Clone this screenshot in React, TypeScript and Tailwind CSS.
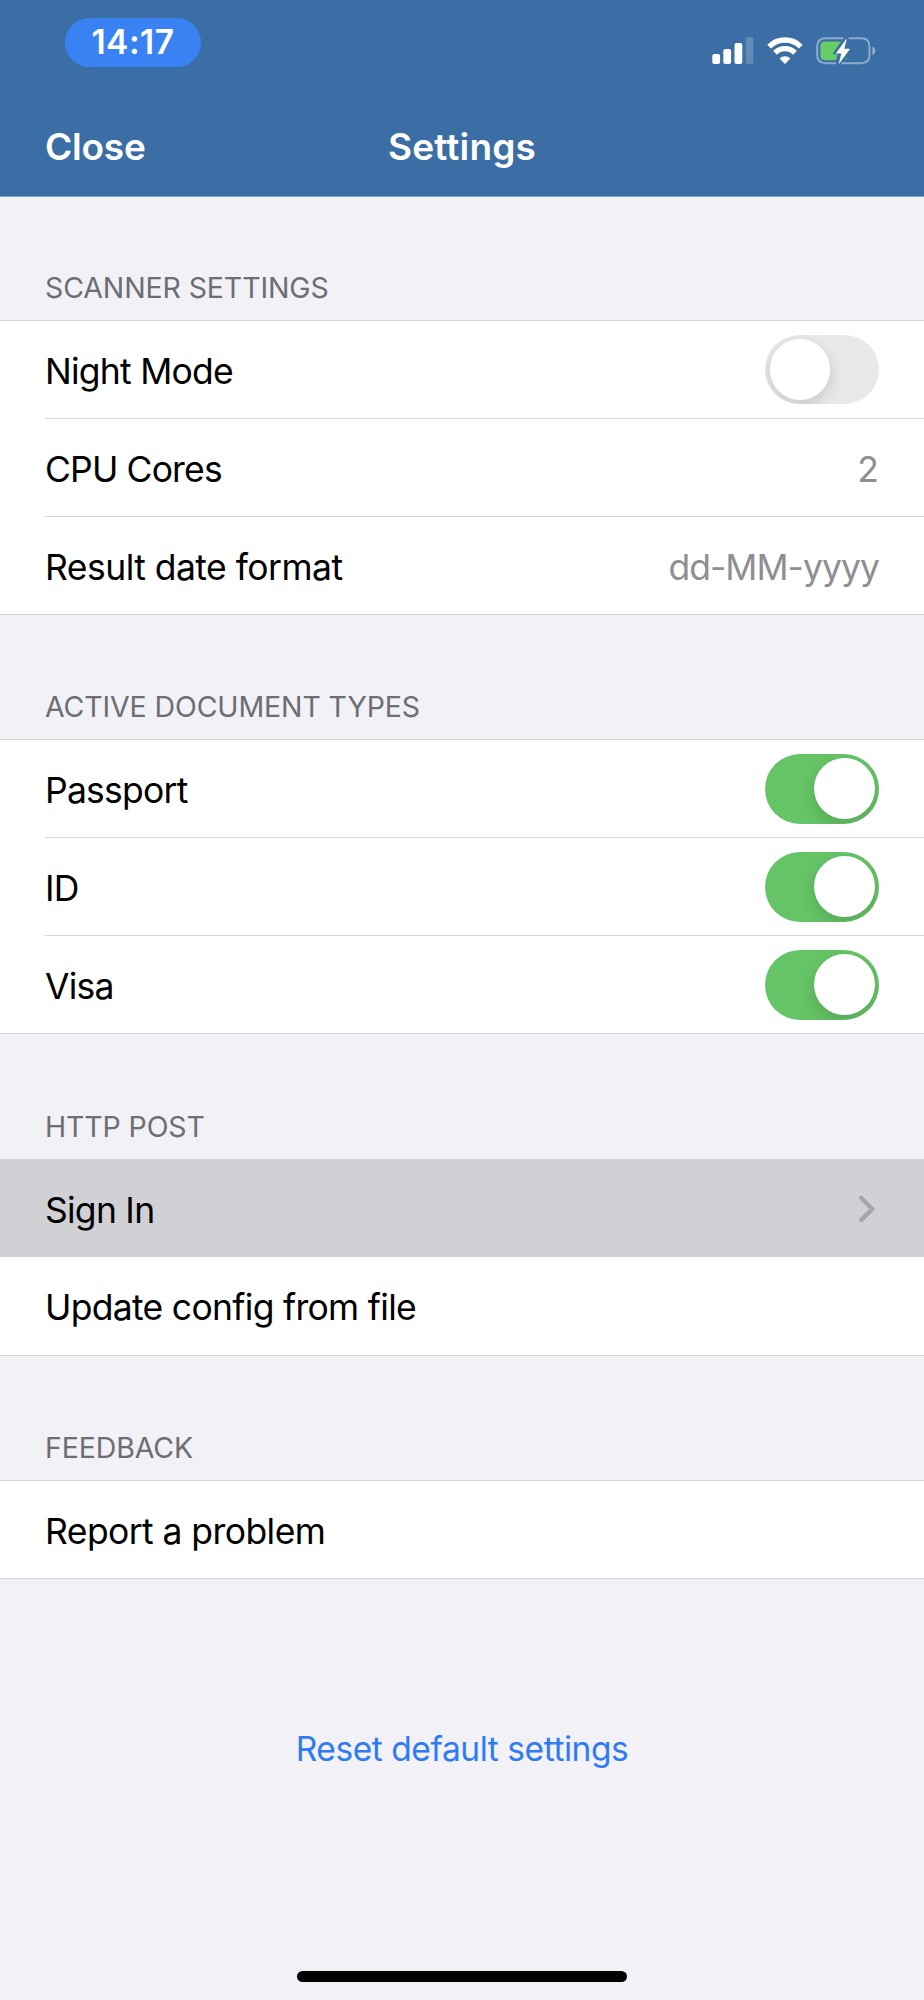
import type { ReactNode } from "react";

function Signal() {
  return (
    <svg width="42" height="28" viewBox="0 0 42 28" className="block">
      <rect x="0.3" y="17" width="7.8" height="10" rx="2" fill="#fff" />
      <rect x="11.3" y="12" width="7.8" height="15" rx="2" fill="#fff" />
      <rect x="22.5" y="6" width="7.8" height="21" rx="2" fill="#fff" />
      <rect x="33.6" y="0" width="7.8" height="27" rx="2" fill="#fff" fillOpacity="0.2" />
    </svg>
  );
}

function Wifi() {
  return (
    <svg width="36" height="28" viewBox="0 0 36 28" className="block">
      <g fill="none" stroke="#fff" strokeWidth="5.4">
        <path d="M2.2 9.6A22.3 22.3 0 0 1 33.8 9.6" />
        <path d="M8 15.8A14 14 0 0 1 28 15.8" />
      </g>
      <path d="M18 27L12.6 21.4A7.8 7.8 0 0 1 23.4 21.4Z" fill="#fff" />
    </svg>
  );
}

function Battery() {
  return (
    <svg width="60" height="28" viewBox="0 0 60 28" className="block">
      <g fill="none" stroke="#fff" strokeOpacity="0.42" strokeWidth="2">
        <path d="M27.6 1.2H10C4.4 1.2 1.2 4 1.2 9.5V18C1.2 23.5 4.4 26.2 10 26.2H20" />
        <path d="M32.5 1.2H45C50.6 1.2 53.5 4 53.5 9.5V18C53.5 23.5 50.6 26.2 45 26.2H25.5" />
      </g>
      <path d="M56.4 9.5C58.3 10.4 59.3 12 59.3 13.8C59.3 15.6 58.3 17.2 56.4 18Z" fill="#fff" fillOpacity="0.45" />
      <path d="M25 4.4H9.5C6 4.4 4.4 6 4.4 9.5V18C4.4 21.6 6 23.2 9.5 23.2H20L21.8 17.3H16.3Z" fill="#67ce67" />
      <path d="M28.8 23.2L31 20.3C30.9 22 30.3 22.9 28.8 23.2Z" fill="#67ce67" />
      <path d="M30.4 2.3L20.2 16.2H25.7L23 26.5L33.7 12H28Z" fill="#fff" stroke="#fff" strokeWidth="0.5" />
    </svg>
  );
}

function Chevron() {
  return (
    <svg width="20" height="30" viewBox="0 0 20 30">
      <path d="M2.3 4L13.3 15L2.3 26" fill="none" stroke="#a5a5aa" strokeWidth="4.5" strokeLinecap="round" strokeLinejoin="round" />
    </svg>
  );
}

function Toggle({ on = false }: { on?: boolean }) {
  return (
    <div
      className={
        on
          ? "flex h-[70px] w-[114px] items-center justify-end overflow-hidden rounded-full bg-[#65c466] px-[4.5px]"
          : "flex h-[69px] w-[114px] items-center overflow-hidden rounded-full bg-[#e9e9e9] px-[4.5px]"
      }
    >
      <div className="size-[60.5px] rounded-full bg-white shadow-[0_6px_16px_rgba(0,0,0,0.15)]" />
    </div>
  );
}

function Section({ title, height = "h-[124px]", children }: { title: string; height?: string; children: ReactNode }) {
  return (
    <section>
      <div className={`flex items-end pb-3 pl-[45px] ${height}`}>
        <h2 className="text-[28.5px] leading-[40px] tracking-[-0.12px] text-[#6d6d72]">{title}</h2>
      </div>
      <div className="border-y border-[#d3d3d6] bg-white">{children}</div>
    </section>
  );
}

type RowProps = {
  label: string;
  height?: string;
  divider?: boolean;
  selected?: boolean;
  tracking?: string;
  children?: ReactNode;
};

function Row({ label, height = "h-[98px]", divider, selected, tracking = "tracking-[-0.75px]", children }: RowProps) {
  return (
    <div className={selected ? "-mt-px bg-[#d1d0d5] pt-px pl-[45px]" : "pl-[45px]"}>
      <div
        className={`flex items-center justify-between pr-[45px] ${height} ${divider ? "border-t border-[#d6d6d8]" : ""}`}
      >
        <span className={`pt-1 text-[35.5px] leading-[44px] text-black ${tracking}`}>{label}</span>
        {children}
      </div>
    </div>
  );
}

export default function App() {
  return (
    <div className="flex h-[2000px] w-[924px] flex-col bg-[#f2f1f6] font-['Inter',sans-serif]">
      <header className="h-[197px] border-b border-[#7fa3cb] bg-[#3a6ea5] text-white">
        <div className="flex h-[100px] items-start justify-between pt-[18px] pr-[48px] pl-[65px]">
          <div className="flex h-[49px] w-[136px] items-center justify-center rounded-full bg-[#3a81f4] text-[33.5px] font-semibold tracking-[0.5px]">
            14:17
          </div>
          <div className="flex pt-[19px]">
            <Signal />
            <div className="pl-[13px]"><Wifi /></div>
            <div className="pl-[13px]"><Battery /></div>
          </div>
        </div>
        <nav className="grid grid-cols-3 px-[45px] pt-6 text-[37px] leading-[46px] font-semibold">
          <span className="tracking-[-0.2px]">Close</span>
          <span className="text-center tracking-[0.15px]">Settings</span>
        </nav>
      </header>
      <main className="flex flex-col">
        <Section title="SCANNER SETTINGS" height="h-[123px]">
          <Row label="Night Mode" height="h-[97px]"><Toggle /></Row>
          <Row label="CPU Cores" divider tracking="tracking-[-0.85px]">
            <span className="pt-1 text-[35.5px] text-[#8e8e93]">2</span>
          </Row>
          <Row label="Result date format" divider tracking="tracking-[-0.53px]">
            <span className="pt-1 text-[35.5px] tracking-[-0.95px] text-[#8e8e93]">dd-MM-yyyy</span>
          </Row>
        </Section>
        <Section title="ACTIVE DOCUMENT TYPES">
          <Row label="Passport" height="h-[97px]"><Toggle on /></Row>
          <Row label="ID" divider><Toggle on /></Row>
          <Row label="Visa" divider><Toggle on /></Row>
        </Section>
        <Section title="HTTP POST" height="h-[125px]">
          <Row label="Sign In" height="h-[97px]" selected><Chevron /></Row>
          <Row label="Update config from file" tracking="tracking-[-0.7px]" />
        </Section>
        <Section title="FEEDBACK">
          <Row label="Report a problem" height="h-[97px]" tracking="tracking-[-0.57px]" />
        </Section>
      </main>
      <button className="mt-[148px] self-center text-[33.5px] leading-[44px] tracking-[-0.43px] text-[#2f7bf6]">
        Reset default settings
      </button>
      <div className="mt-auto mb-[18px] h-[11.5px] w-[330px] self-center rounded-full bg-black" />
    </div>
  );
}
